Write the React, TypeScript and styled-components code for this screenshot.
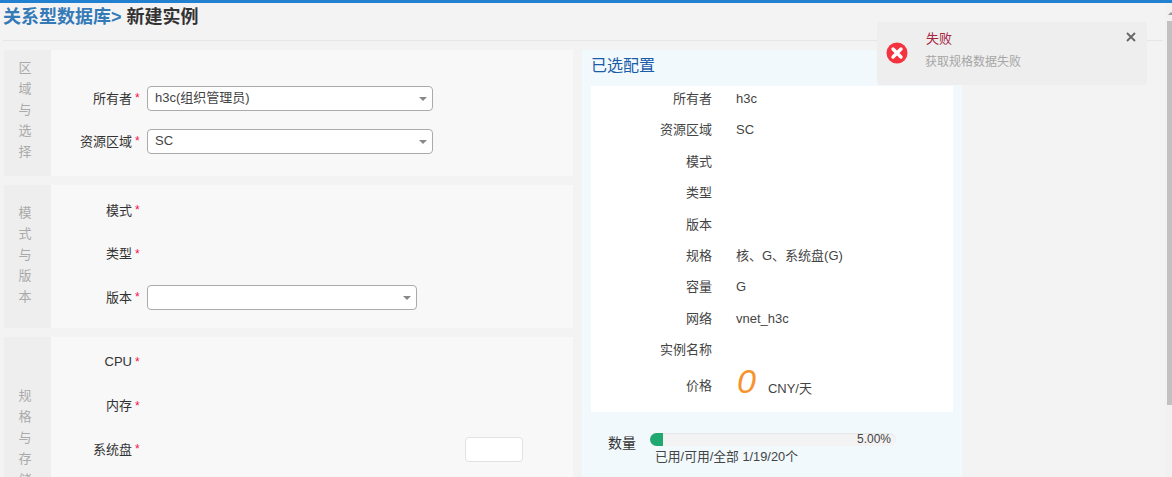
import React from "react";
import styled, { createGlobalStyle } from "styled-components";

const Global = createGlobalStyle`
  html, body { margin: 0; padding: 0; height: 477px; overflow: hidden; background: #f3f3f3; }
  body { font-family: "Liberation Sans", "Noto Sans CJK SC", sans-serif; font-size: 13px; color: #333; }
  * { box-sizing: border-box; }
`;

const Page = styled.div`
  position: relative;
  height: 477px;
  overflow: hidden;
  border-top: 3px solid #2180d0;
`;
const Header = styled.div`
  margin: 0 0 9px 3px;
  width: 1160px;
  height: 38px;
  padding-top: 1px;
  border-bottom: 1px solid #e6e6e6;
  font-size: 18px;
  line-height: 26px;
  font-weight: 700;
  color: #333;
`;
const Crumb = styled.span`
  color: #337ab7;
`;
const Main = styled.div`
  display: flex;
  gap: 9px;
  align-items: flex-start;
  padding-left: 4px;
`;
const Left = styled.div`
  width: 569px;
  display: flex;
  flex-direction: column;
  gap: 9px;
`;
const Section = styled.section<{ $h: number }>`
  display: flex;
  height: ${(p) => p.$h}px;
  background: #f8f8f8;
`;
const SideTitle = styled.div<{ $top?: number }>`
  width: 47px;
  flex: none;
  background: #eeeeee;
  color: #aaa;
  font-size: 13px;
  line-height: 21px;
  text-align: center;
  padding-right: 5px;
  padding-top: ${(p) => p.$top ?? 7}px;
`;
const Fields = styled.div<{ $top: number; $gap: number }>`
  flex: 1;
  display: flex;
  flex-direction: column;
  gap: ${(p) => p.$gap}px;
  padding-top: ${(p) => p.$top}px;
`;
const Field = styled.div`
  display: flex;
  align-items: center;
  height: 25px;
  position: relative;
`;
const Label = styled.div`
  width: 81px;
  text-align: right;
  color: #333;
  flex: none;
  padding-bottom: 3px;
`;
const Star = styled.span`
  width: 15px;
  flex: none;
  color: #f0134d;
  font-size: 12px;
  padding-left: 3px;
  padding-bottom: 1px;
`;
const Select = styled.div<{ $w: number }>`
  width: ${(p) => p.$w}px;
  height: 25px;
  background: #fff;
  border: 1px solid #aaa;
  border-radius: 4px;
  padding: 0 7px;
  line-height: 22px;
  color: #444;
  position: relative;
  &::after {
    content: "";
    position: absolute;
    right: 5px;
    top: 10px;
    border: 4px solid transparent;
    border-top: 4px solid #888;
    border-bottom: 0;
  }
`;
const DiskInput = styled.div`
  position: absolute;
  left: 414px;
  top: 0;
  width: 58px;
  height: 25px;
  background: #fff;
  border: 1px solid #e2e2e2;
  border-radius: 4px;
`;

const Right = styled.aside`
  width: 380px;
  height: 427px;
  flex: none;
  background: #f1f9fd;
  padding: 0 9px;
`;
const RightTitle = styled.div`
  height: 36px;
  font-size: 16px;
  line-height: 31px;
  color: #1a5ca8;
`;
const Summary = styled.div`
  background: #fff;
  height: 326px;
  display: flex;
  flex-direction: column;
  padding-top: 3px;
`;
const Row = styled.div`
  display: flex;
  align-items: flex-start;
  height: 31.4px;
  line-height: 19px;
`;
const PriceRow = styled.div`
  display: flex;
  align-items: center;
  height: 26px;
`;
const RowKey = styled.div`
  width: 121px;
  flex: none;
  text-align: right;
  color: #444;
`;
const RowVal = styled.div`
  margin-left: 24px;
  color: #444;
`;
const Price = styled.span`
  font-size: 34px;
  line-height: 40px;
  font-style: italic;
  color: #f7932e;
  font-family: "Liberation Sans", sans-serif;
  margin: -7px 0 0 25px;
`;
const Unit = styled.span`
  margin-left: 12px;
  color: #444;
  padding-top: 6px;
`;
const Quota = styled.div`
  display: flex;
  padding: 21px 0 0 17px;
`;
const QuotaLabel = styled.div`
  font-size: 14px;
  line-height: 20px;
  width: 42px;
  flex: none;
`;
const QuotaBody = styled.div`
  width: 246px;
`;
const Track = styled.div`
  position: relative;
  height: 13px;
  border-radius: 7px;
  background: #f3f3f3;
  box-shadow: inset 0 1px 1px #e6e6e6;
  overflow: hidden;
`;
const Fill = styled.div`
  height: 100%;
  background: #1fa971;
`;
const Pct = styled.span`
  position: absolute;
  right: 5px;
  top: -2px;
  font-size: 12px;
  line-height: 16px;
  color: #444;
`;
const QuotaText = styled.div`
  padding: 2px 0 0 5px;
  line-height: 17px;
  font-size: 12.8px;
  color: #444;
`;

const Toast = styled.div`
  position: absolute;
  left: 877px;
  top: 19px;
  width: 270px;
  height: 63px;
  background: #eeeeee;
  border-radius: 3px;
`;
const ToastIcon = styled.svg`
  position: absolute;
  left: 9px;
  top: 20px;
`;
const ToastTitle = styled.div`
  position: absolute;
  left: 49px;
  top: 7px;
  font-size: 13px;
  line-height: 19px;
  color: #a5243f;
`;
const ToastMsg = styled.div`
  position: absolute;
  left: 48px;
  top: 31px;
  font-size: 12px;
  line-height: 18px;
  color: #a6a6a6;
`;
const ToastClose = styled.svg`
  position: absolute;
  right: 11px;
  top: 10px;
`;
const Scrollbar = styled.div`
  position: absolute;
  right: 0;
  top: 0;
  bottom: 0;
  width: 7px;
  background: #f1f1f1;
  &::before {
    content: "";
    position: absolute;
    left: 3px;
    top: 9px;
    border: 3px solid transparent;
    border-bottom: 3px solid #999;
    border-top: 0;
  }
`;
const Thumb = styled.div`
  position: absolute;
  top: 18px;
  left: 2px;
  right: 0;
  height: 384px;
  background: #c1c1c1;
`;

const VChars = ({ text }: { text: string }) => (
  <>
    {text.split("").map((c, i) => (
      <div key={i}>{c}</div>
    ))}
  </>
);

const rows: [string, string][] = [
  ["所有者", "h3c"],
  ["资源区域", "SC"],
  ["模式", ""],
  ["类型", ""],
  ["版本", ""],
  ["规格", "核、G、系统盘(G)"],
  ["容量", "G"],
  ["网络", "vnet_h3c"],
  ["实例名称", ""],
];

export default function App() {
  return (
    <Page>
      <Global />
      <Header>
        <Crumb>关系型数据库&gt;</Crumb> 新建实例
      </Header>
      <Main>
        <Left>
          <Section $h={126}>
            <SideTitle><VChars text="区域与选择" /></SideTitle>
            <Fields $top={36} $gap={18}>
              <Field>
                <Label>所有者</Label><Star>*</Star>
                <Select $w={286}>h3c(组织管理员)</Select>
              </Field>
              <Field>
                <Label>资源区域</Label><Star>*</Star>
                <Select $w={286}>SC</Select>
              </Field>
            </Fields>
          </Section>
          <Section $h={143}>
            <SideTitle $top={17}><VChars text="模式与版本" /></SideTitle>
            <Fields $top={13} $gap={18.5}>
              <Field><Label>模式</Label><Star>*</Star></Field>
              <Field><Label>类型</Label><Star>*</Star></Field>
              <Field>
                <Label>版本</Label><Star>*</Star>
                <Select $w={270} />
              </Field>
            </Fields>
          </Section>
          <Section $h={200}>
            <SideTitle $top={48}><VChars text="规格与存储" /></SideTitle>
            <Fields $top={13} $gap={18.5}>
              <Field><Label>CPU</Label><Star>*</Star></Field>
              <Field><Label>内存</Label><Star>*</Star></Field>
              <Field>
                <Label>系统盘</Label><Star>*</Star>
                <DiskInput />
              </Field>
            </Fields>
          </Section>
        </Left>
        <Right>
          <RightTitle>已选配置</RightTitle>
          <Summary>
            {rows.map(([k, v]) => (
              <Row key={k}>
                <RowKey>{k}</RowKey>
                <RowVal>{v}</RowVal>
              </Row>
            ))}
            <PriceRow>
              <RowKey>价格</RowKey>
              <Price>0</Price>
              <Unit>CNY/天</Unit>
            </PriceRow>
          </Summary>
          <Quota>
            <QuotaLabel>数量</QuotaLabel>
            <QuotaBody>
              <Track>
                <Fill style={{ width: "5.3%" }} />
                <Pct>5.00%</Pct>
              </Track>
              <QuotaText>已用/可用/全部 1/19/20个</QuotaText>
            </QuotaBody>
          </Quota>
        </Right>
      </Main>
      <Toast>
        <ToastIcon width="22" height="22" viewBox="0 0 22 22">
          <circle cx="11" cy="11" r="10.5" fill="#f5333f" />
          <path d="M7 7l8 8M15 7l-8 8" stroke="#fff" strokeWidth="3.4" strokeLinecap="round" />
        </ToastIcon>
        <ToastTitle>失败</ToastTitle>
        <ToastMsg>获取规格数据失败</ToastMsg>
        <ToastClose width="10" height="10" viewBox="0 0 10 10">
          <path d="M1 1l8 8M9 1l-8 8" stroke="#666" strokeWidth="1.8" />
        </ToastClose>
      </Toast>
      <Scrollbar><Thumb /></Scrollbar>
    </Page>
  );
}
